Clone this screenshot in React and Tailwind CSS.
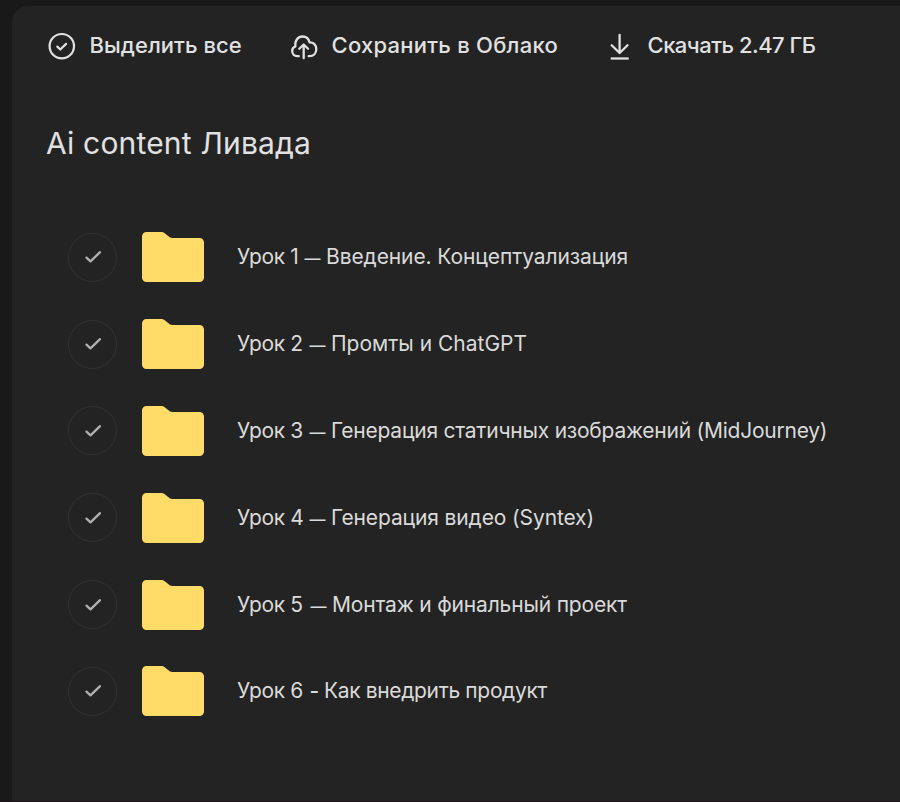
const actions = [
  { label: "Выделить все", Icon: SelectIcon, width: "w-[242px]", gap: "gap-[13.500px]", tracking: "tracking-[0.050px]" },
  { label: "Сохранить в Облако", Icon: CloudIcon, width: "w-[315px]", gap: "gap-[13.500px]", tracking: "tracking-[0.250px]" },
  { label: "Скачать 2.47 ГБ", Icon: DownloadIcon, width: "w-[220px]", gap: "gap-[14.500px]", tracking: "tracking-[-0.500px]" },
];

const folders = [
  { lesson: "Урок 1 ", dash: "—", title: "Введение. Концептуализация", lessonWidth: "w-[67.500px]", dashStyle: "w-[21.500px] text-base", tracking: "tracking-[-0.100px]" },
  { lesson: "Урок 2 ", dash: "—", title: "Промты и ChatGPT", lessonWidth: "w-[72.500px]", dashStyle: "w-[21.500px] text-base", tracking: "tracking-[0px]" },
  { lesson: "Урок 3 ", dash: "—", title: "Генерация статичных изображений (MidJourney)", lessonWidth: "w-[72.500px]", dashStyle: "w-[21.500px] text-base", tracking: "tracking-[-0.230px]" },
  { lesson: "Урок 4 ", dash: "—", title: "Генерация видео (Syntex)", lessonWidth: "w-[72.500px]", dashStyle: "w-[21.500px] text-base", tracking: "tracking-[-0.120px]" },
  { lesson: "Урок 5 ", dash: "—", title: "Монтаж и финальный проект", lessonWidth: "w-[73.500px]", dashStyle: "w-[21.500px] text-base", tracking: "tracking-[-0.170px]" },
  { lesson: "Урок 6 ", dash: "-", title: "Как внедрить продукт", lessonWidth: "w-[72.500px]", dashStyle: "w-[14.500px] text-[21px]", tracking: "tracking-[-0.350px]" },
];

function SelectIcon() {
  return (
    <svg className="size-7" viewBox="0 0 28 28" fill="none" stroke="currentColor" strokeWidth="2.200" strokeLinecap="round" strokeLinejoin="round">
      <circle cx="13.800" cy="14.200" r="12.200" />
      <path d="M9.300 14.600l3 2.900 5.800-5.600" />
    </svg>
  );
}

function CloudIcon() {
  return (
    <svg className="size-7" viewBox="0 0 28 28" fill="none" stroke="currentColor" strokeWidth="2.300" strokeLinecap="round" strokeLinejoin="round">
      <path d="M8.800 24.200H7.300C4.200 24.200 2.200 22 2.200 19.100c0-2.200 1.200-4 3.200-4.700C4.600 8.600 8 4.500 12.600 4.500c3.500 0 6.100 2.200 6.900 5.800 4-.2 6.800 2.700 6.800 6.700 0 4.200-2.700 7.200-6.800 7.200h-.8" />
      <path d="M13.700 26.200V12.700M9.300 16.800l4.400-4.300 4.400 4.300" />
    </svg>
  );
}

function DownloadIcon() {
  return (
    <svg className="size-7" viewBox="0 0 28 28" fill="none" stroke="currentColor" strokeWidth="2.300" strokeLinecap="round" strokeLinejoin="round">
      <path d="M14.600 3V20.500M6.700 13.300l7.900 7.700 7.900-7.700" />
      <path d="M5.700 26.500h18" strokeLinecap="butt" />
    </svg>
  );
}

function FolderIcon() {
  return (
    <svg className="ml-[25px] h-[50px] w-[62px] shrink-0" viewBox="0 0 62 50">
      <path
        d="M4.500 0H19c1.400 0 2.300.300 3.400 1.100l5 4c.900.700 1.700.900 3 .900H57.500C60 6 62 8 62 10.500V45.500C62 48 60 50 57.500 50h-53C2 50 0 48 0 45.500v-41C0 2 2 0 4.500 0z"
        fill="#ffdc68"
      />
    </svg>
  );
}

export default function App() {
  return (
    <div className="h-[802px] w-[900px] overflow-hidden border-b border-[#1c1117] bg-[#191919] pt-1.5 pl-3 font-['Inter',sans-serif] text-[#e1e1e1]">
      <div className="h-full rounded-tl-2xl bg-[#232323]">
        {/* Toolbar */}
        <div className="flex h-20 items-center pl-9">
          {actions.map(({ label, Icon, width, gap, tracking }) => (
            <button key={label} className={`flex shrink-0 items-center ${width} ${gap}`}>
              <Icon />
              <span className={`mb-0.5 text-[22px] leading-7 font-medium whitespace-nowrap ${tracking}`}>{label}</span>
            </button>
          ))}
        </div>

        <h1 className="mt-[37px] ml-[34px] text-[30px] leading-10 tracking-[0.180px] whitespace-nowrap">
          Ai content Ливада
        </h1>

        {/* Folder list */}
        <ul className="mt-[51px] pl-14">
          {folders.map(({ lesson, dash, title, lessonWidth, dashStyle, tracking }) => (
            <li key={title} className="flex h-[86.800px] items-center">
              <span className="flex size-[49px] shrink-0 items-center justify-center rounded-full border-[1.500px] border-[#323232] text-[#b0b0b0]">
                <svg className="h-4 w-5" viewBox="0 0 20 16" fill="none" stroke="currentColor" strokeWidth="2.300" strokeLinecap="round" strokeLinejoin="round">
                  <path d="M3.500 8.600l4 3.700L17 3.200" />
                </svg>
              </span>
              <FolderIcon />
              <span className="ml-[33px] flex items-baseline text-[21px] leading-7 whitespace-pre text-[#dadada]">
                <span className={`tracking-[-0.350px] ${lessonWidth}`}>{lesson}</span>
                <span className={`font-medium ${dashStyle}`}>{dash}</span>
                <span className={tracking}>{title}</span>
              </span>
            </li>
          ))}
        </ul>
      </div>
    </div>
  );
}
